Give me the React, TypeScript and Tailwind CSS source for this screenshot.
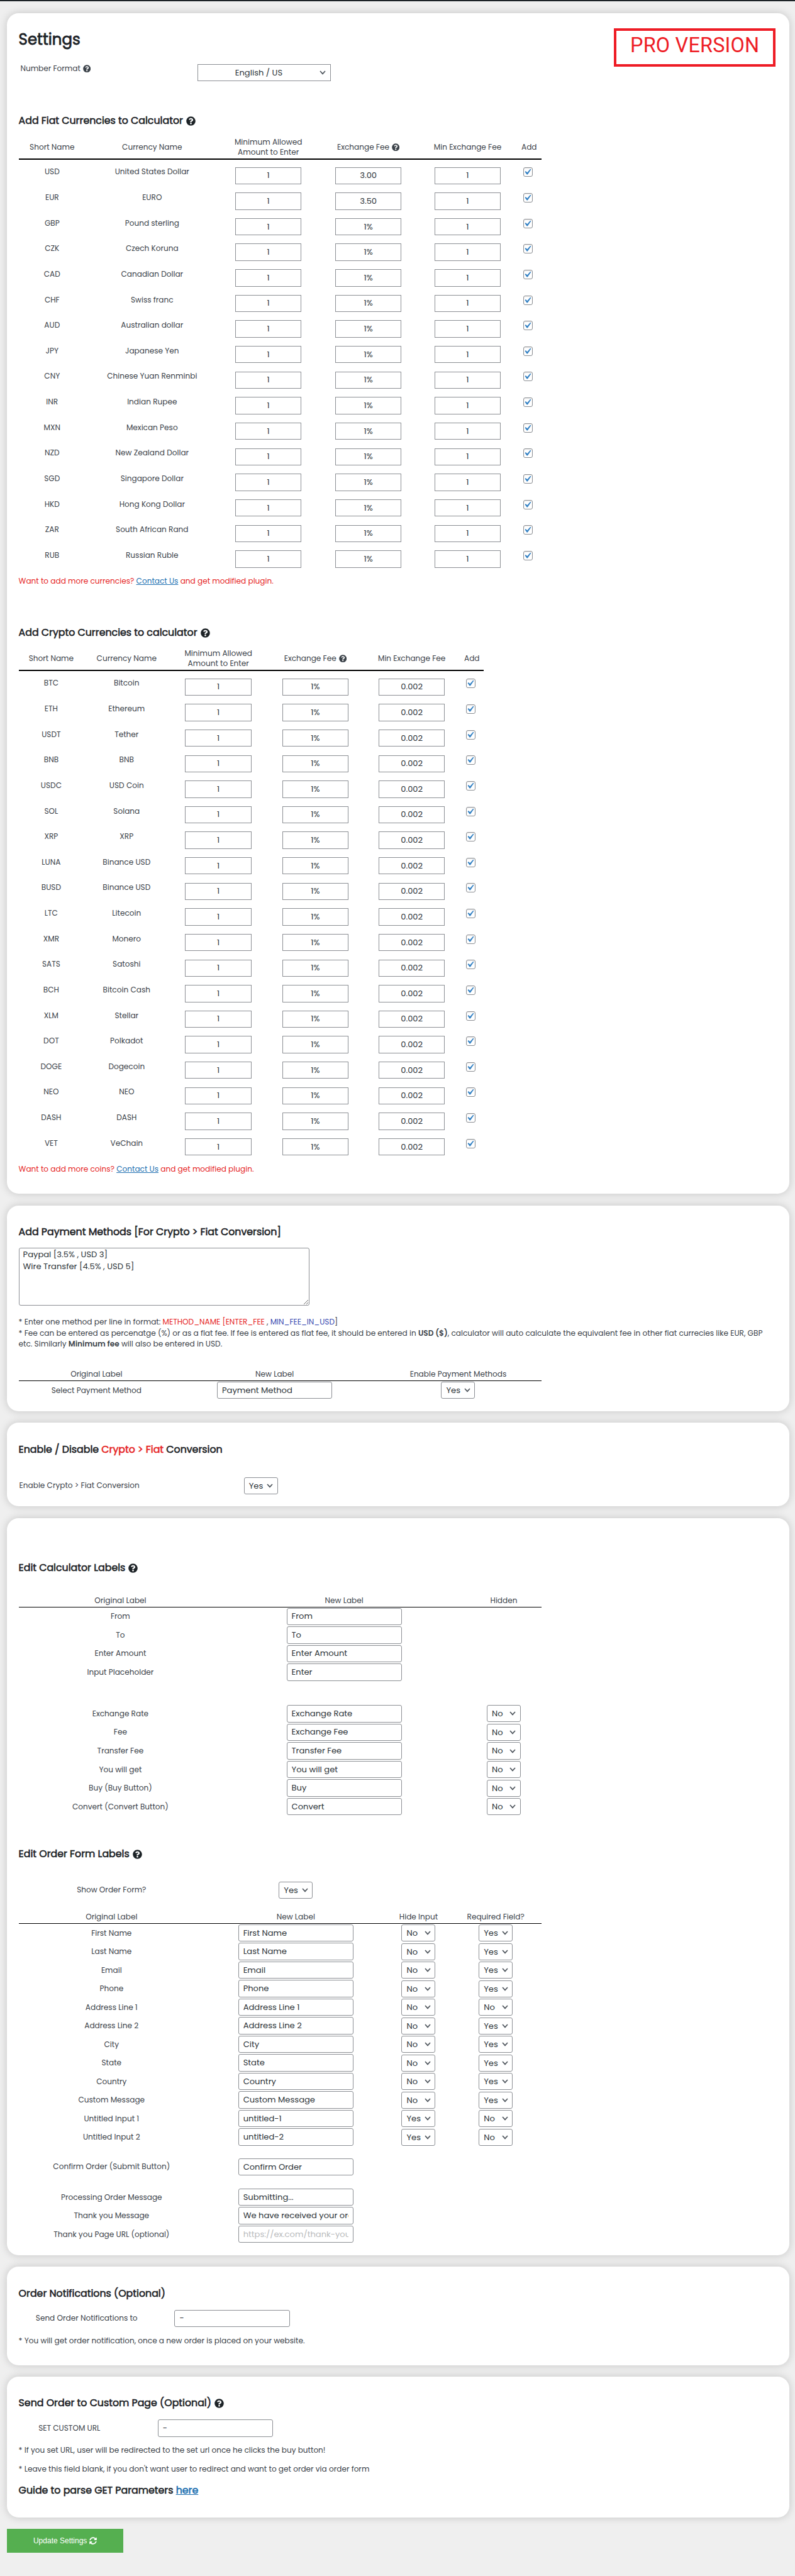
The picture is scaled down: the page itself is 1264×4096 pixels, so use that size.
import React from 'react'
import { FaQuestionCircle, FaSyncAlt } from 'react-icons/fa'

const FIAT: string[][] = [
  ['USD', 'United States Dollar', '3.00'],
  ['EUR', 'EURO', '3.50'],
  ['GBP', 'Pound sterling', '1%'],
  ['CZK', 'Czech Koruna', '1%'],
  ['CAD', 'Canadian Dollar', '1%'],
  ['CHF', 'Swiss franc', '1%'],
  ['AUD', 'Australian dollar', '1%'],
  ['JPY', 'Japanese Yen', '1%'],
  ['CNY', 'Chinese Yuan Renminbi', '1%'],
  ['INR', 'Indian Rupee', '1%'],
  ['MXN', 'Mexican Peso', '1%'],
  ['NZD', 'New Zealand Dollar', '1%'],
  ['SGD', 'Singapore Dollar', '1%'],
  ['HKD', 'Hong Kong Dollar', '1%'],
  ['ZAR', 'South African Rand', '1%'],
  ['RUB', 'Russian Ruble', '1%'],
]

const CRYPTO: string[][] = [
  ['BTC', 'Bitcoin'],
  ['ETH', 'Ethereum'],
  ['USDT', 'Tether'],
  ['BNB', 'BNB'],
  ['USDC', 'USD Coin'],
  ['SOL', 'Solana'],
  ['XRP', 'XRP'],
  ['LUNA', 'Binance USD'],
  ['BUSD', 'Binance USD'],
  ['LTC', 'Litecoin'],
  ['XMR', 'Monero'],
  ['SATS', 'Satoshi'],
  ['BCH', 'Bitcoin Cash'],
  ['XLM', 'Stellar'],
  ['DOT', 'Polkadot'],
  ['DOGE', 'Dogecoin'],
  ['NEO', 'NEO'],
  ['DASH', 'DASH'],
  ['VET', 'VeChain'],
]

const CALC_TOP = [
  ['From', 'From'],
  ['To', 'To'],
  ['Enter Amount', 'Enter Amount'],
  ['Input Placeholder', 'Enter'],
]

const CALC_BOTTOM = [
  ['Exchange Rate', 'Exchange Rate'],
  ['Fee', 'Exchange Fee'],
  ['Transfer Fee', 'Transfer Fee'],
  ['You will get', 'You will get'],
  ['Buy (Buy Button)', 'Buy'],
  ['Convert (Convert Button)', 'Convert'],
]

const ORDER = [
  ['First Name', 'First Name', 'No', 'Yes'],
  ['Last Name', 'Last Name', 'No', 'Yes'],
  ['Email', 'Email', 'No', 'Yes'],
  ['Phone', 'Phone', 'No', 'Yes'],
  ['Address Line 1', 'Address Line 1', 'No', 'No'],
  ['Address Line 2', 'Address Line 2', 'No', 'Yes'],
  ['City', 'City', 'No', 'Yes'],
  ['State', 'State', 'No', 'Yes'],
  ['Country', 'Country', 'No', 'Yes'],
  ['Custom Message', 'Custom Message', 'No', 'Yes'],
  ['Untitled Input 1', 'untitled-1', 'Yes', 'No'],
  ['Untitled Input 2', 'untitled-2', 'Yes', 'No'],
]

const FIAT_COLS = 'grid grid-cols-[106.4px_211.6px_158.2px_159.8px_155.8px_39.8px] w-[831.6px]'
const CRYPTO_COLS = 'grid grid-cols-[103.6px_136.2px_155.6px_152.8px_153.8px_37.4px] w-[739.4px]'
const CALC_COLS = 'grid grid-cols-[323.6px_388px_119.6px] w-[831.6px]'
const ORDER_COLS = 'grid grid-cols-[295.4px_290.6px_99.8px_145.6px] w-[831.6px]'
const PAY_COLS = 'grid grid-cols-[247.4px_319.4px_264.2px] w-[831.6px]'

function Card({ className, children }: { className: string; children: React.ReactNode }) {
  return (
    <section
      className={`relative ml-[11.3px] w-[1243.9px] rounded-[18.5px] bg-white pl-[18.3px] shadow-[0_0_14px_rgba(0,0,0,0.18)] ${className}`}
    >
      {children}
    </section>
  )
}

function Heading({ className, help, children }: { className: string; help?: boolean; children: React.ReactNode }) {
  return (
    <h2
      className={`flex h-5 items-center whitespace-pre text-[15.8px] leading-5 text-[#1d2327] [-webkit-text-stroke:0.6px_currentColor] ${className}`}
    >
      <span>{children}</span>
      {help && <FaQuestionCircle className="ml-[5px] size-[15px] [stroke-width:0]" />}
    </h2>
  )
}

function Field({ value, className, placeholder }: { value?: string; className: string; placeholder?: string }) {
  return (
    <input
      className={`h-[27.4px] border border-[#8c8f94] bg-white px-[7px] text-[13.1px] text-[#2c3338] outline-none placeholder:text-[#b9bbbd] ${className}`}
      defaultValue={value}
      placeholder={placeholder}
    />
  )
}

function Chevron() {
  return (
    <svg viewBox="0 0 10 7" className="h-[7px] w-[10px] shrink-0" fill="none" stroke="#50575e" strokeWidth="1.7">
      <path d="M1 1l4 4.4L9 1" />
    </svg>
  )
}

function Select({ value }: { value: string }) {
  return (
    <button className="flex h-[27.2px] w-[54px] items-center justify-between rounded-[3px] border border-[#8c8f94] bg-white pr-[6.5px] pl-[7px] text-[13.1px] leading-none text-[#2c3338]">
      {value}
      <Chevron />
    </button>
  )
}

function Check() {
  return (
    <span className="mt-[7.6px] mr-[4px] flex size-[15px] items-center justify-center rounded-[3px] border border-[#8c8f94] bg-white shadow-[inset_0_1px_2px_rgba(0,0,0,0.1)]">
      <svg viewBox="1 0 20 20" className="size-[19px] shrink-0" fill="#3582c4">
        <path d="M14.83 4.89l1.34.94-5.81 8.38H9.02L5.78 9.67l1.34-1.25 2.57 2.4z" />
      </svg>
    </span>
  )
}

function CurrencyTable({ cols, rows, fee, rowClass, className }: { cols: string; rows: string[][]; fee: string; rowClass: string; className: string }) {
  const input = 'mt-[6.8px] w-[105.6px] text-center'
  return (
    <div className={className}>
      <div className={`${cols} h-[38px] items-center justify-items-center border-b-2 border-black text-center leading-4`}>
        <span>Short Name</span>
        <span>Currency Name</span>
        <span>
          Minimum Allowed
          <br />
          Amount to Enter
        </span>
        <span className="flex items-center gap-1">
          Exchange Fee <FaQuestionCircle className="size-[12.4px]" />
        </span>
        <span>Min Exchange Fee</span>
        <span>Add</span>
      </div>
      <div className="pt-[4.6px]">
        {rows.map(([code, name, rate]) => (
          <div key={code} className={`${cols} ${rowClass} items-start justify-items-center`}>
            <span className="mt-[5.6px] leading-[18px]">{code}</span>
            <span className="mt-[5.6px] leading-[18px]">{name}</span>
            <Field value="1" className={input} />
            <Field value={rate ?? '1%'} className={input} />
            <Field value={fee} className={input} />
            <Check />
          </div>
        ))}
      </div>
    </div>
  )
}

function MorePlugin({ what, className }: { what: string; className: string }) {
  return (
    <p className={`h-[18px] leading-[18px] text-[#e62626] ${className}`}>
      Want to add more {what}? <a className="text-[#2271b1] underline">Contact Us</a> and get modified plugin.
    </p>
  )
}

const HEAD = 'items-end justify-items-center border-b border-black leading-5'
const ROW = 'items-center justify-items-center'
const LABEL_INPUT = 'w-[183.3px] rounded-[3px]'

export default function App() {
  return (
    <div className="h-[4096px] w-[1264px] overflow-hidden bg-[#efefef] font-['Poppins','Inter',sans-serif] text-[12.1px] whitespace-nowrap text-[#3c434a]">
      <div className="h-[2.4px] bg-[#1d2327]" />

      <Card className="mt-[18.3px] h-[1877.8px] pt-[26.4px]">
        <div className="absolute top-[23.9px] left-[965.2px] flex h-[61.4px] w-[256.5px] items-center justify-center border-4 border-[#ee1c25] bg-white pb-[6px] font-['Roboto',sans-serif] text-[32.4px] leading-none tracking-[0.2px] text-[#ee1c25]">
          PRO VERSION
        </div>
        <h1 className="h-8 text-[24.4px] leading-8 text-[#1d2327] [-webkit-text-stroke:0.8px_currentColor]">Settings</h1>
        <div className="mt-[23.4px] flex h-[27px] items-start">
          <span className="flex w-[284px] items-center gap-1 pl-[2.8px] leading-[13.4px]">
            Number Format <FaQuestionCircle className="size-[12.4px]" />
          </span>
          <button className="flex h-[27px] w-[212.7px] items-center border border-[#8c8f94] bg-white pr-[7px] text-[13.1px] leading-none text-[#2c3338]">
            <span className="flex-1 text-center">English / US</span>
            <Chevron />
          </button>
        </div>
        <Heading className="mt-[52.7px]" help>
          Add Fiat Currencies to Calculator
        </Heading>
        <CurrencyTable className="mt-[14px]" cols={FIAT_COLS} rows={FIAT} fee="1" rowClass="h-[40.656px]" />
        <MorePlugin what="currencies" className="mt-[5.9px]" />
        <Heading className="mt-[63.4px]" help>
          Add Crypto Currencies to calculator
        </Heading>
        <CurrencyTable className="mt-[13px]" cols={CRYPTO_COLS} rows={CRYPTO} fee="0.002" rowClass="h-[40.63px]" />
        <MorePlugin what="coins" className="mt-[5.8px]" />
      </Card>

      <Card className="mt-[18.7px] h-[326.5px] pt-[32.1px]">
        <Heading className="">Add Payment Methods [For Crypto &gt; Fiat Conversion]</Heading>
        <textarea
          className="mt-[14.3px] block h-[92.4px] w-[462.2px] rounded-[3px] border border-[#8c8f94] px-[6px] py-[1.5px] text-[13.1px] leading-[18.7px] text-[#2c3338]"
          defaultValue={'Paypal [3.5% , USD 3]\nWire Transfer [4.5% , USD 5]'}
        />
        <p className="mt-[17px] leading-[17.75px]">
          * Enter one method per line in format: <span className="text-[#e62626]">METHOD_NAME [ENTER_FEE</span> ,{' '}
          <span className="text-[#3a4bb0]">MIN_FEE_IN_USD</span>]
          <br />* Fee can be entered as percenatge (%) or as a flat fee. If fee is entered as flat fee, it should be entered in{' '}
          <b className="font-semibold">USD ($)</b>, calculator will auto calculate the equivalent fee in other fiat currecies like EUR, GBP
          <br />
          etc. Similarly <b className="font-semibold">Minimum fee</b> will also be entered in USD.
        </p>
        <div className={`${PAY_COLS} ${HEAD} mt-[28.4px] h-[21px]`}>
          <span>Original Label</span>
          <span>New Label</span>
          <span>Enable Payment Methods</span>
        </div>
        <div className={`${PAY_COLS} ${ROW} h-[30px]`}>
          <span>Select Payment Method</span>
          <Field value="Payment Method" className={LABEL_INPUT} />
          <Select value="Yes" />
        </div>
      </Card>

      <Card className="mt-[18.5px] h-[133px] pt-[32.8px]">
        <Heading className="">
          Enable / Disable <span className="text-[#e62626]">Crypto &gt; Fiat</span> Conversion
        </Heading>
        <div className="mt-[33.7px] flex h-[27.2px] items-center">
          <span className="w-[358.1px] pl-[1px]">Enable Crypto &gt; Fiat Conversion</span>
          <Select value="Yes" />
        </div>
      </Card>

      <Card className="mt-[18.5px] h-[1172.5px] pt-[69.6px]">
        <Heading className="" help>
          Edit Calculator Labels
        </Heading>
        <div className={`${CALC_COLS} ${HEAD} mt-[31.3px] h-[21px]`}>
          <span>Original Label</span>
          <span>New Label</span>
          <span>Hidden</span>
        </div>
        {CALC_TOP.map(([label, value]) => (
          <div key={label} className={`${CALC_COLS} ${ROW} h-[29.57px]`}>
            <span>{label}</span>
            <Field value={value} className={LABEL_INPUT} />
          </div>
        ))}
        <div className="mt-[36.3px]">
          {CALC_BOTTOM.map(([label, value]) => (
            <div key={label} className={`${CALC_COLS} ${ROW} h-[29.57px]`}>
              <span>{label}</span>
              <Field value={value} className={LABEL_INPUT} />
              <Select value="No" />
            </div>
          ))}
        </div>
        <Heading className="mt-[51px]" help>
          Edit Order Form Labels
        </Heading>
        <div className={`${ORDER_COLS} ${ROW} mt-[33px] h-[28px]`}>
          <span>Show Order Form?</span>
          <Select value="Yes" />
        </div>
        <div className={`${ORDER_COLS} ${HEAD} mt-[18.4px] h-[21px]`}>
          <span>Original Label</span>
          <span>New Label</span>
          <span>Hide Input</span>
          <span>Required Field?</span>
        </div>
        {ORDER.map(([label, value, hide, required]) => (
          <div key={label} className={`${ORDER_COLS} ${ROW} h-[29.5px]`}>
            <span>{label}</span>
            <Field value={value} className={LABEL_INPUT} />
            <Select value={hide} />
            <Select value={required} />
          </div>
        ))}
        <div className={`${ORDER_COLS} ${ROW} mt-[17.9px] h-[29.5px]`}>
          <span>Confirm Order (Submit Button)</span>
          <Field value="Confirm Order" className={LABEL_INPUT} />
        </div>
        <div className={`${ORDER_COLS} ${ROW} mt-[18.6px] h-[29.5px]`}>
          <span>Processing Order Message</span>
          <Field value="Submitting..." className={LABEL_INPUT} />
        </div>
        <div className={`${ORDER_COLS} ${ROW} h-[29.5px]`}>
          <span>Thank you Message</span>
          <Field value="We have received your order" className={LABEL_INPUT} />
        </div>
        <div className={`${ORDER_COLS} ${ROW} h-[29.5px]`}>
          <span>Thank you Page URL (optional)</span>
          <Field placeholder="https://ex.com/thank-you" className={LABEL_INPUT} />
        </div>
      </Card>

      <Card className="mt-[18.3px] h-[156.5px] pt-[32.6px]">
        <Heading className="">Order Notifications (Optional)</Heading>
        <div className="mt-[15.5px] flex items-center pl-[27.2px]">
          <span className="w-[220.6px]">Send Order Notifications to</span>
          <Field value="-" className={LABEL_INPUT} />
        </div>
        <p className="mt-[12.6px] leading-[18px]">* You will get order notification, once a new order is placed on your website.</p>
      </Card>

      <Card className="mt-[18.2px] h-[223.8px] pt-[32.3px]">
        <Heading className="" help>
          Send Order to Custom Page (Optional)
        </Heading>
        <div className="mt-[16px] flex items-center pl-[31.6px]">
          <span className="w-[189.6px]">SET CUSTOM URL</span>
          <Field value="-" className={LABEL_INPUT} />
        </div>
        <p className="mt-[12.6px] leading-[18px]">* If you set URL, user will be redirected to the set url once he clicks the buy button!</p>
        <p className="mt-[11.5px] leading-[18px]">* Leave this field blank, if you don't want user to redirect and want to get order via order form</p>
        <Heading className="mt-[14.7px]">
          Guide to parse GET Parameters <a className="text-[#2271b1] underline">here</a>
        </Heading>
      </Card>

      <button className="mt-[18px] ml-[11.3px] flex h-[38px] w-[184.7px] items-center justify-center gap-[4px] bg-[#55af50] font-['Liberation_Sans',Arial,sans-serif] text-[12px] leading-none text-white">
        Update Settings <FaSyncAlt className="size-3" />
      </button>
      <p className="mt-[34.5px] ml-[11.3px] font-['Liberation_Sans',Arial,sans-serif] text-[11.5px] leading-[14px] text-[#c3c4c7]">
        Thank you for creating with <a className="text-[#b5c7dd]">WordPress</a>
      </p>
    </div>
  )
}
